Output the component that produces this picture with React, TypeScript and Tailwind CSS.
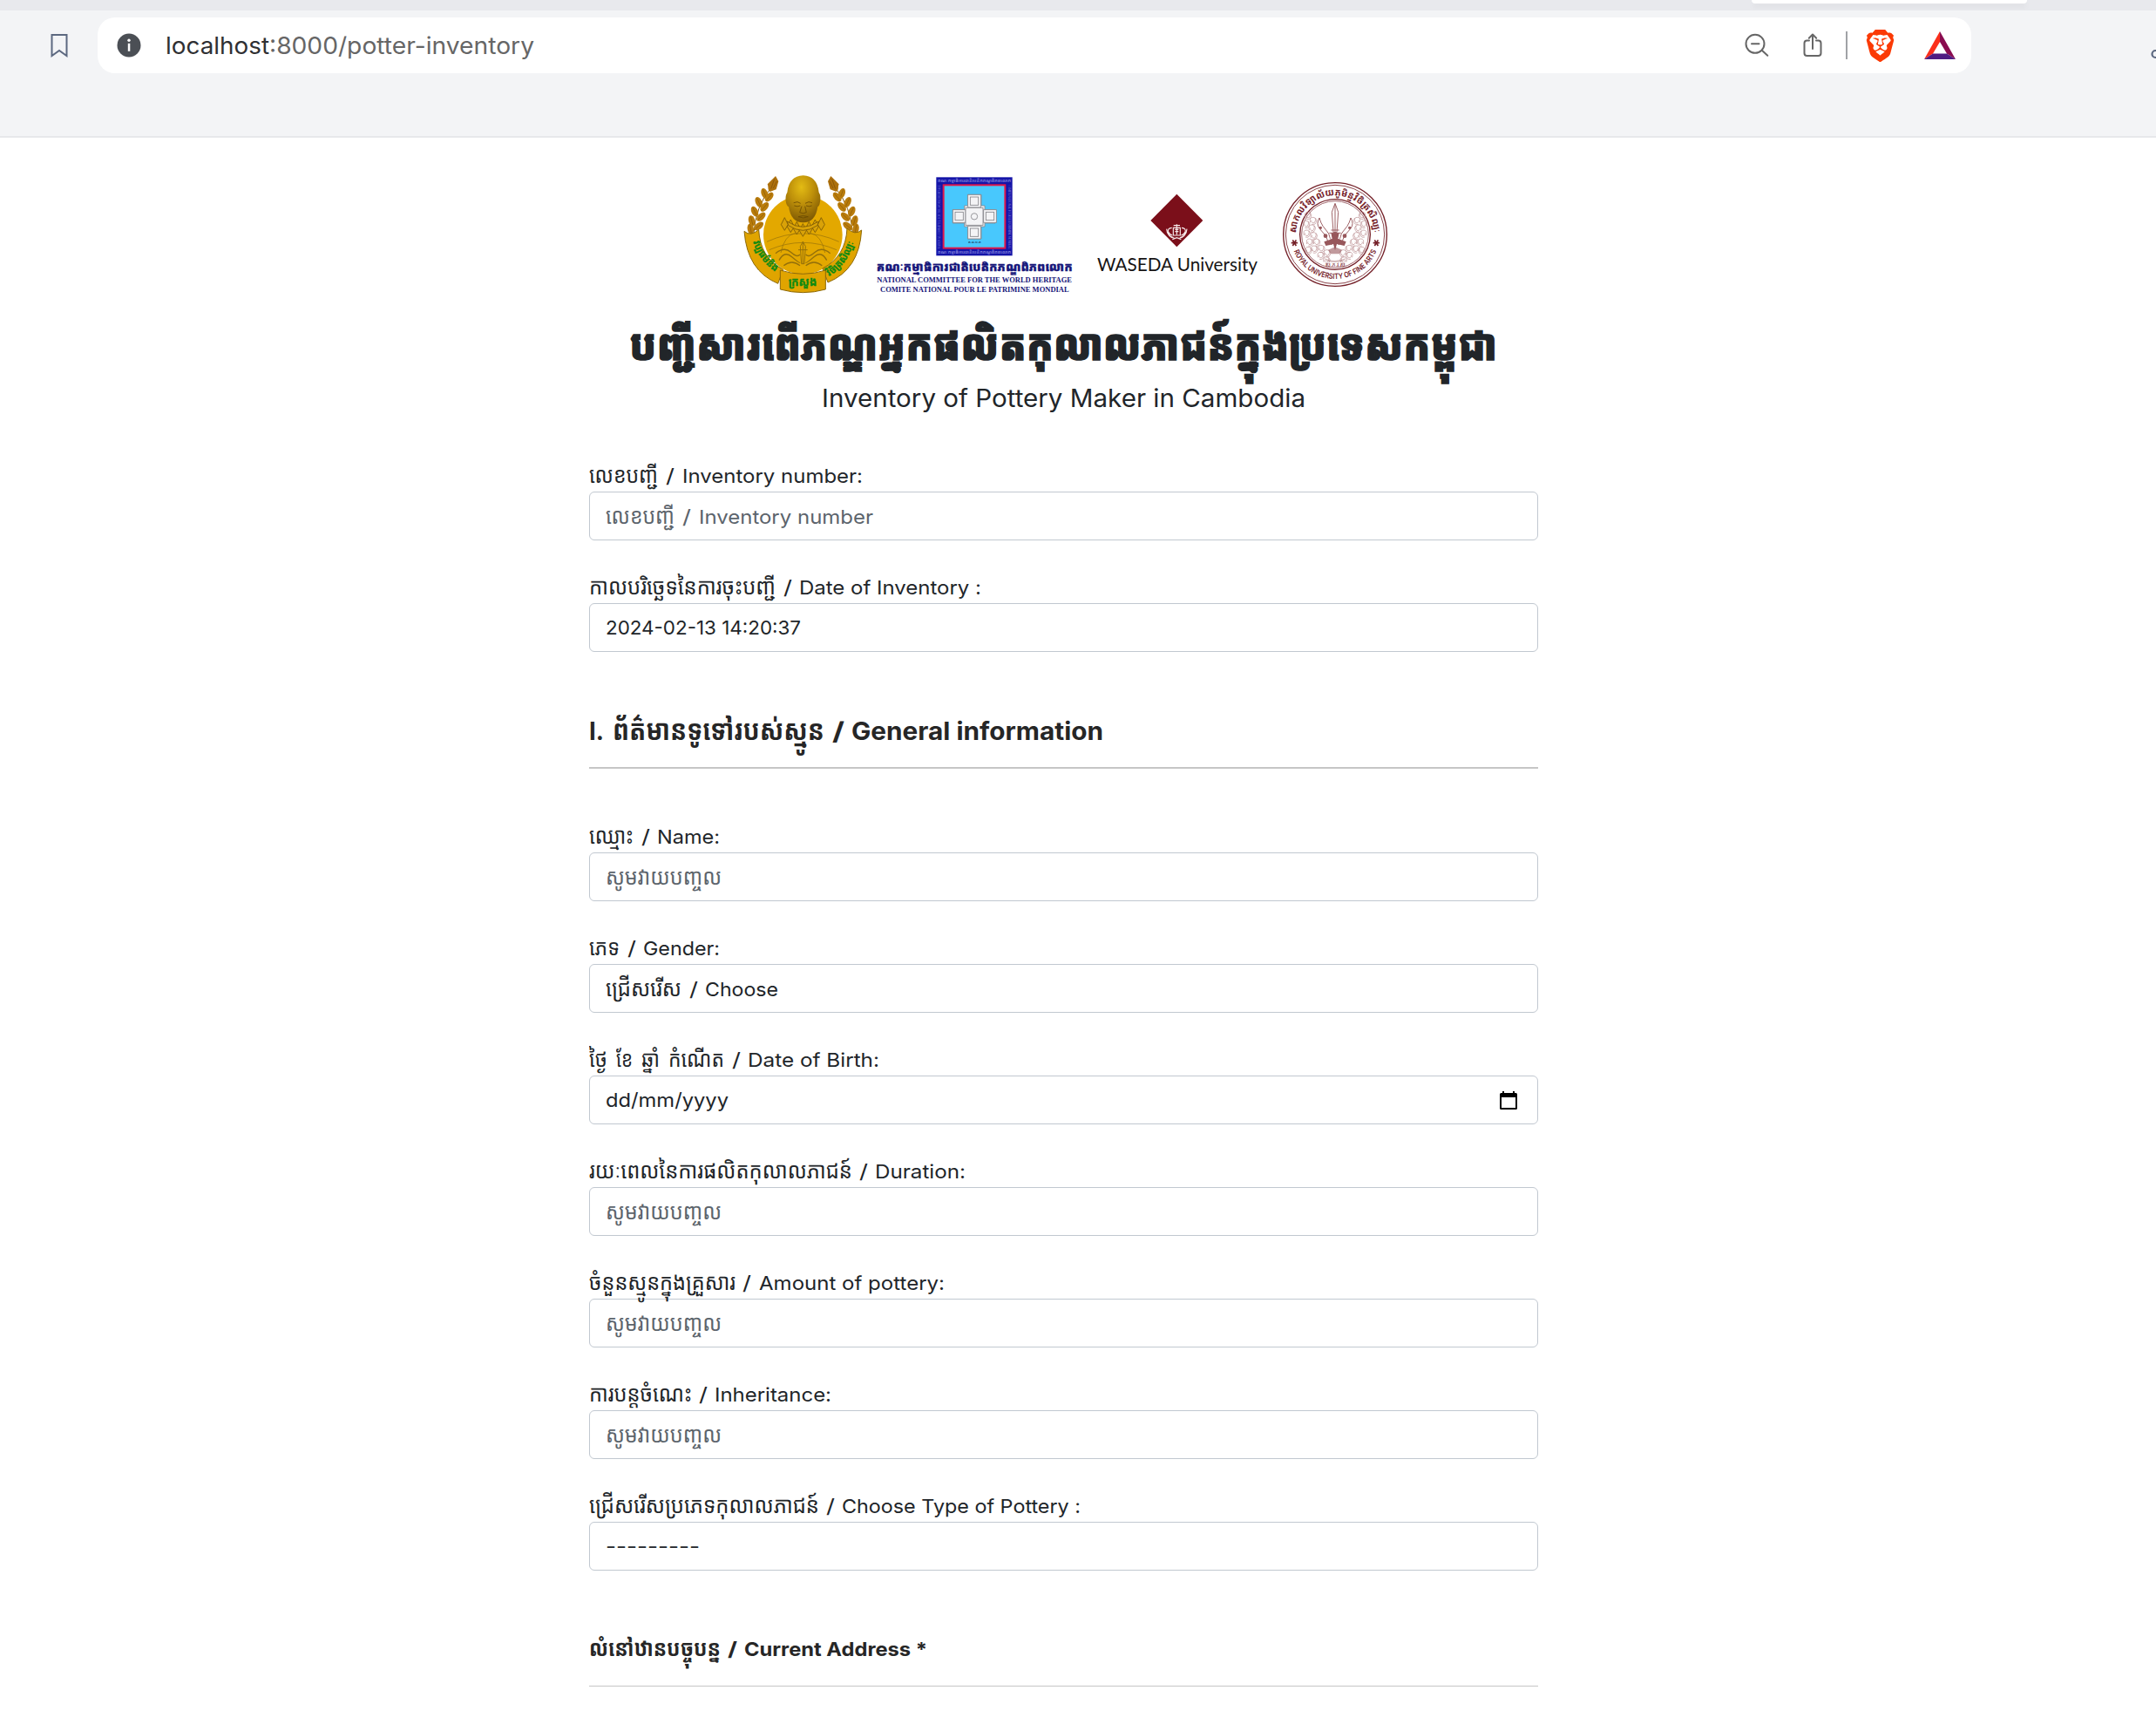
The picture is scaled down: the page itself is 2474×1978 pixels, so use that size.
import { useLayoutEffect, useRef } from "react";
import { SiBrave } from "react-icons/si";

type Run = [text: string, width: number, gap?: number];

const khmer = /[\u1780-\u17ff]/;

/* One piece of text stretched or squeezed to an exact advance width. */
function Fit({ text, width, gap }: { text: string; width: number; gap: number }) {
  const ref = useRef<HTMLSpanElement>(null);
  useLayoutEffect(() => {
    const el = ref.current;
    if (!el) return;
    el.style.transform = "none";
    const natural = el.getBoundingClientRect().width;
    if (natural > 0) el.style.transform = `scaleX(${width / natural})`;
  }, [width]);
  return (
    <span
      className={khmer.test(text) ? "inline-block text-[1.18em] whitespace-nowrap" : "inline-block whitespace-nowrap"}
      style={{ width, marginLeft: gap }}
    >
      <span ref={ref} className="inline-block origin-left whitespace-nowrap">
        {text}
      </span>
    </span>
  );
}

function Line({ runs }: { runs: Run[] }) {
  return (
    <span className="flex items-baseline whitespace-nowrap">
      {runs.map(([text, width, gap = 10], i) => (
        <Fit key={i} text={text} width={width} gap={i === 0 ? 0 : gap} />
      ))}
    </span>
  );
}

const enterHint: Run[] = [["សូមវាយបញ្ចល", 133]];

interface FieldData {
  label: Run[];
  value: Run[];
  hint?: boolean;
  date?: boolean;
}

const topFields: FieldData[] = [
  {
    label: [["លេខបញ្ជី", 79], ["/", 10, 9], ["Inventory number:", 207, 9]],
    value: [["លេខបញ្ជី", 79], ["/", 10, 9], ["Inventory number", 200, 9]],
    hint: true,
  },
  {
    label: [["កាលបរិច្ឆេទនៃការចុះបញ្ជី", 214], ["/", 10, 9], ["Date of Inventory :", 209, 8]],
    value: [["2024-02-13 14:20:37", 224]],
  },
];

const generalFields: FieldData[] = [
  { label: [["ឈ្មោះ", 51], ["/", 10, 9], ["Name:", 72, 8]], value: enterHint, hint: true },
  {
    label: [["ភេទ", 35], ["/", 10, 9], ["Gender:", 88, 8]],
    value: [["ជ្រើសរើស", 87], ["/", 10, 9], ["Choose", 84, 8]],
  },
  {
    label: [["ថ្ងៃ", 21], ["ខែ", 19, 10], ["ឆ្នាំ", 21, 10], ["កំណើត", 64, 10], ["/", 10, 9], ["Date of Birth:", 151, 8]],
    value: [["dd/mm/yyyy", 141]],
    date: true,
  },
  { label: [["រយៈពេលនៃការផលិតកុលាលភាជន៍", 302], ["/", 10, 8], ["Duration:", 104, 8]], value: enterHint, hint: true },
  { label: [["ចំនួនស្មូនក្នុងគ្រួសារ", 168], ["/", 10, 8], ["Amount of pottery:", 213, 9]], value: enterHint, hint: true },
  { label: [["ការបន្តចំណេះ", 118], ["/", 10, 8], ["Inheritance:", 134, 8]], value: enterHint, hint: true },
  {
    label: [["ជ្រើសរើសប្រភេទកុលាលភាជន៍", 264], ["/", 10, 8], ["Choose Type of Pottery :", 274, 8]],
    value: [["---------", 108]],
  },
];

function CalendarIcon() {
  return (
    <svg viewBox="0 0 20 21" className="h-[21px] w-5">
      <path d="M3 0h2v2H3zM15 0h2v2h-2z" fill="#000" />
      <path d="M1.5 2h17A1.5 1.5 0 0 1 20 3.5v16a1.5 1.5 0 0 1-1.5 1.5h-17A1.5 1.5 0 0 1 0 19.500v-16A1.500 1.500 0 0 1 1.500 2zM2 7v12h16V7z" fill="#000" fillRule="evenodd" />
    </svg>
  );
}

function Field({ label, value, hint, date }: FieldData) {
  return (
    <div className="h-32">
      <div className="flex h-10 items-center pt-[3px] text-[22px] leading-10">
        <Line runs={label} />
      </div>
      <div
        className={
          "flex h-14 items-center justify-between rounded-[6px] border border-[#c1c8d0] bg-white pr-[23px] pl-[18px] text-[22px] leading-10 " +
          (hint ? "text-[#5c646c]" : "text-[#212529]")
        }
      >
        <Line runs={value} />
        {date && <CalendarIcon />}
      </div>
    </div>
  );
}

function BrowserBar() {
  return (
    <header className="flex h-[158px] flex-col border-b-2 border-[#e7e8eb] bg-[#f3f4f6]">
      <div className="h-3 overflow-hidden bg-[#e8e9ed] pl-[2010px]">
        <div className="h-1 w-[316px] rounded-b-xl bg-white shadow-md" />
      </div>
      <div className="flex h-[80px] items-center">
        <svg viewBox="0 0 20 28" className="ml-[58px] h-7 w-5" fill="none" stroke="#5c6880" strokeWidth="2">
          <path d="M1.500 2h17v24L10 20 1.500 26z" />
        </svg>
        <div className="ml-[34px] flex h-16 w-[2150px] items-center rounded-[20px] bg-white">
          <svg viewBox="0 0 28 28" className="ml-[22px] size-7">
            <circle cx="14" cy="14" r="13.500" fill="#4b4f55" />
            <circle cx="14" cy="8.200" r="1.700" fill="#fff" />
            <path d="M12.800 11.800h2.500v9h-2.500z" fill="#fff" />
          </svg>
          <div className="ml-7 flex text-[27px] leading-none text-[#666]">
            <span className="text-[#2f3033]"><Fit text="localhost" width={119} gap={0} /></span>
            <Fit text=":8000/potter-inventory" width={304} gap={0} />
          </div>
          <div className="ml-auto flex items-center">
            <svg viewBox="0 0 28 28" className="size-7" fill="none" stroke="#666" strokeWidth="2" strokeLinecap="round">
              <circle cx="12" cy="12.300" r="10.500" />
              <path d="M8 12.300h8.500M19.800 19.800l6.500 6" />
            </svg>
            <svg viewBox="0 0 22 28" className="ml-[39px] h-7 w-[22px]" fill="none" stroke="#666" strokeWidth="2" strokeLinecap="round" strokeLinejoin="round">
              <path d="M7 8.500H4.500A3 3 0 0 0 1.500 11.500v11.500a3 3 0 0 0 3 3h13a3 3 0 0 0 3-3v-11.500a3 3 0 0 0-3-3H15M11 18V1.800M6.800 5.800 11 1.500l4.200 4.300" />
            </svg>
            <div className="ml-[27px] h-8 w-0.5 bg-[#a0a2a6]" />
            <SiBrave className="ml-[19px] size-[37px] text-[#fb3a05]" />
            <svg viewBox="0 0 36 32" className="mr-[18px] ml-8 h-8 w-9">
              <path d="M18 0v12L10 25.500 0 32z" fill="#fb2f1b" />
              <path d="M18 0v12l8 13.500L36 32z" fill="#8a0c50" />
              <path d="M0 32 10 25.500h16L36 32z" fill="#4f1c82" />
            </svg>
          </div>
        </div>
        <svg viewBox="0 0 6 12" className="mt-5 ml-[206px] h-3 w-[6px]">
          <circle cx="5.500" cy="6" r="4" fill="none" stroke="#5c6880" strokeWidth="2.200" />
        </svg>
      </div>
    </header>
  );
}

const leaves = [
  [137, 70, 25], [112, 96, -20], [128, 108, 40], [92, 126, -25], [112, 142, 40],
  [78, 158, -25], [100, 176, 45], [68, 190, -15], [92, 208, 50], [64, 218, -10],
];

function Laurel() {
  return (
    <g>
      <path d="M135 75Q80 140 74 240" fill="none" stroke="#8a5a05" strokeWidth="3" />
      {leaves.map(([x, y, r], i) => (
        <g key={i} transform={`rotate(${r} ${x} ${y})`}>
          <ellipse cx={x} cy={y} rx="11" ry="19" fill="#b97c0c" />
          <path d={`M${x} ${y - 15}v30`} stroke="#8f5c06" strokeWidth="2" />
        </g>
      ))}
      <path d="M150 36l-28 28 8 26 22-8 8-28z" fill="#ad700c" />
      <path d="M146 46l-12 34M154 54l-12 24" stroke="#7c4d04" strokeWidth="2" />
    </g>
  );
}

function MinistryEmblem() {
  const petals = [-60, -40, -20, 0, 20, 40, 60];
  return (
    <svg viewBox="39 30 411 408" className="h-[136px] w-[137px] overflow-visible">
      <defs>
        <radialGradient id="face" cx="45%" cy="25%" r="80%">
          <stop offset="0" stopColor="#e3bb14" />
          <stop offset="0.450" stopColor="#bd8f0a" />
          <stop offset="1" stopColor="#765203" />
        </radialGradient>
        <path id="ribbonLeft" d="M72 262Q92 330 158 372" />
        <path id="ribbonRight" d="M334 382Q402 336 420 258" />
      </defs>
      <Laurel />
      <g transform="translate(490 0) scale(-1 1)"><Laurel /></g>
      <circle cx="244" cy="238" r="136" fill="#e3a800" />
      <g fill="none" stroke="#94700a" strokeWidth="2">
        <path d="M120 262Q244 205 368 262M168 300Q180 240 218 232M320 300Q308 240 270 232M128 290Q244 240 360 290" />
        <path d="M244 262l-9 16 4 60h10l4-60zM228 290h32M244 262v76" strokeWidth="3" />
        <path d="M150 302q30-24 52-4t32 8M338 302q-30-24-52-4t-32 8M162 326q18-34 44-12t28 20M326 326q-18-34-44-12t-28 20M178 344q28-22 56 0M310 344q-28-22-56 0" strokeWidth="4" />
      </g>
      <g fill="#d9a208" stroke="#7a5806" strokeWidth="2.500">
        {petals.map((a) => (
          <path key={a} d="M244 244l-12-20 12-24 12 24z" transform={`translate(${a * 1.050} ${-Math.abs(a) * 0.350})`} />
        ))}
        <path d="M190 192q54 38 108 0l-4 14q-50 34-100 0z" />
      </g>
      <path d="M190 92Q196 36 245 34q48 2 54 58 8 12 4 32-2 16-8 18-8 54-50 54t-50-54q-8-4-10-20-2-20 5-30z" fill="url(#face)" />
      <g fill="none" stroke="#6b4a03" strokeWidth="2.500">
        <path d="M212 128q14-7 24 2M252 130q12-9 24-2M214 138q11 5 21 0M255 138q11 5 20 0M240 140l-7 21q12 7 23 0l-5-21M228 176q16-7 34 0-16 8-34 0" />
      </g>
      <path d="M42 226q22 20 50-6Q96 316 176 358l-18 48Q52 362 42 226zM446 222q-22 20-50-6-4 96-84 138l18 48q108-44 116-180z" fill="#e0a400" stroke="#8c6807" strokeWidth="3" />
      <path d="M166 360q78 26 156 0v66q-78 22-156 0z" fill="#e0a400" stroke="#8c6807" strokeWidth="3" />
      <g fill="#0d8a12" stroke="#0d8a12" strokeWidth="1" fontWeight="700" fontFamily="'Noto Sans Khmer', 'Noto Sans', sans-serif">
        <text x="194" y="413" fontSize="38" textLength="98" lengthAdjust="spacingAndGlyphs">ក្រសួង</text>
        <text fontSize="34"><textPath href="#ribbonLeft" textLength="132" lengthAdjust="spacingAndGlyphs">វប្បធម៌និង</textPath></text>
        <text fontSize="34"><textPath href="#ribbonRight" textLength="148" lengthAdjust="spacingAndGlyphs">វិចិត្រសិល្បៈ</textPath></text>
      </g>
    </svg>
  );
}

function HeritageLogo() {
  const rooms = [[812, 100], [760, 152], [866, 152], [812, 208]];
  return (
    <svg viewBox="495 30 681 408" className="ml-[15px] h-[136px] w-[227px] overflow-visible">
      <rect x="703" y="40" width="262" height="270" fill="#1414a8" />
      <rect x="728" y="67" width="212" height="217" fill="#48c8fd" stroke="#e0184a" strokeWidth="6" />
      <g fill="#7676d6" fontSize="15" fontWeight="700" fontFamily="'Noto Sans Khmer', 'Noto Sans', sans-serif">
        <text x="708" y="58" textLength="252" lengthAdjust="spacingAndGlyphs">គណៈកម្មាធិការជាតិបេតិកភណ្ឌពិភពលោក</text>
        <text x="708" y="304" textLength="252" lengthAdjust="spacingAndGlyphs">គណៈកម្មាធិការជាតិបេតិកភណ្ឌពិភពលោក</text>
      </g>
      <g fill="#7676d6" fontSize="11" fontFamily="'Liberation Serif', serif">
        <text transform="translate(718 286) rotate(-90)" textLength="220" lengthAdjust="spacingAndGlyphs">NATIONAL COMMITTEE FOR THE WORLD HERITAGE</text>
        <text transform="translate(950 66) rotate(90)" textLength="220" lengthAdjust="spacingAndGlyphs">COMITE NATIONAL POUR LE PATRIMINE MONDIAL</text>
      </g>
      <g fill="#f4f4f6" stroke="#85858a" strokeWidth="2.500">
        <path d="M812 100h46v38h12v14h36v46h-36v12h-12v42h-46v-42h-12v-12h-40v-46h40v-14h12z" />
        {rooms.map(([x, y]) => (
          <g key={`${x}-${y}`}>
            <rect x={x} y={y} width="44" height="44" />
            <rect x={x + 8} y={y + 8} width="28" height="28" />
          </g>
        ))}
        <rect x="804" y="145" width="60" height="60" />
        <circle cx="834" cy="175" r="11" />
      </g>
      <text x="813" y="268" fontSize="12" fontWeight="700" fill="#1b3d68" textLength="44" fontFamily="'Noto Sans Khmer', sans-serif">គ.ជ.ប.ភ</text>
      <g fill="#16167a">
        <text x="497" y="364" fontSize="42" fontWeight="900" stroke="#16167a" strokeWidth="1" textLength="675" lengthAdjust="spacingAndGlyphs" fontFamily="'Noto Sans Khmer', 'Noto Sans', sans-serif">គណៈកម្មាធិការជាតិបេតិកភណ្ឌពិភពលោក</text>
        <text x="499" y="402" fontSize="27" fontWeight="700" textLength="671" lengthAdjust="spacingAndGlyphs" fontFamily="'Liberation Serif', serif">NATIONAL COMMITTEE FOR THE WORLD HERITAGE</text>
        <text x="510" y="435" fontSize="27" fontWeight="700" textLength="650" lengthAdjust="spacingAndGlyphs" fontFamily="'Liberation Serif', serif">COMITE NATIONAL POUR LE PATRIMINE MONDIAL</text>
      </g>
    </svg>
  );
}

function WasedaLogo() {
  return (
    <svg viewBox="54 30 558 408" className="ml-[26px] h-[136px] w-[186px] overflow-visible">
      <path d="M331 98l90 91-90 91-90-91z" fill="#7b0f1a" />
      <g fill="none" stroke="#f6e9ea" strokeWidth="3.500">
        <path d="M320 206h22M331 202v10M319 214h24v26h-24zM325 220h12M325 227h12M331 216v22" />
        <path d="M314 214q-16 2-12 14 4 10 14 12M348 214q16 2 12 14-4 10-14 12M296 218q2 24 24 30M366 218q-2 24-24 30M304 240q14 14 27 8 13 6 27-8M316 254l15-6 15 6" />
      </g>
      <text x="57" y="362" fontSize="66" fill="#161414" textLength="552" lengthAdjust="spacingAndGlyphs" fontFamily="Lato, sans-serif">WASEDA University</text>
    </svg>
  );
}

function Scrolls() {
  const curls = [
    [782, 170], [800, 188], [776, 200], [796, 214], [778, 232], [802, 240], [788, 262],
    [812, 262], [804, 286], [828, 284], [826, 308], [848, 300], [846, 324], [784, 290],
  ];
  return (
    <g fill="none" stroke="#b98d90" strokeWidth="2">
      {curls.map(([x, y], i) => (
        <path key={i} d={`M${x - 9} ${y + 8}q-4-18 8-18t9 12-10 7-3-9M${x + 8} ${y - 8}q8 8 2 17M${x - 4} ${y + 14}q8 4 14-4`} />
      ))}
    </g>
  );
}

function FineArtsSeal() {
  return (
    <svg viewBox="690 30 372 408" className="ml-[26px] h-[136px] w-[124px] overflow-visible">
      <defs>
        <path id="sealTop" d="M742 237a134 134 0 0 1 268 0" />
        <path id="sealBottom" d="M723 237a153 153 0 0 0 306 0" />
      </defs>
      <g fill="none" stroke="#742028">
        <circle cx="876" cy="237" r="178" strokeWidth="4" />
        <circle cx="876" cy="237" r="170" strokeWidth="2.500" />
        <circle cx="876" cy="237" r="121" strokeWidth="4" />
        <circle cx="876" cy="237" r="115" strokeWidth="2" />
      </g>
      <Scrolls />
      <g transform="translate(1752 0) scale(-1 1)"><Scrolls /></g>
      <g fill="#fff" stroke="#8b4449" strokeWidth="2.500">
        <path d="M876 130l-11 30 5 70h12l5-70z" />
        <path d="M876 134v130M856 232h40M862 222h28" />
        <path d="M822 180q-12 20 0 36l22 26q4 20 20 30l6-8q-14-12-16-30l-20-26q-8-12-12-28zM930 180q12 20 0 36l-22 26q-4 20-20 30l-6-8q14-12 16-30l20-26q8-12 12-28z" />
      </g>
      <g fill="#97575b">
        <path d="M862 232h28l-4 20 28 10-6 14-26-6-6 22-6-22-26 6-6-14 28-10z" />
        <circle cx="843" cy="242" r="7" /><circle cx="909" cy="242" r="7" />
        <circle cx="826" cy="214" r="5" /><circle cx="926" cy="214" r="5" />
        <path d="M852 290l24-10 24 10-10 14h-28z" opacity=".6" />
        <path d="M838 318q38 18 76 0l-8 10q-30 10-60 0z" opacity=".4" />
      </g>
      <g stroke="#742028" strokeWidth="5">
        <path d="M725 266h22M730 256l12 20M742 256l-12 20" />
        <path d="M1007 266h22M1012 256l12 20M1024 256l-12 20" />
      </g>
      <g fill="#742028">
        <text x="843" y="349" fontSize="18" textLength="68" lengthAdjust="spacingAndGlyphs" fontFamily="'Noto Sans Khmer', sans-serif">ស.ភ.វ.ស</text>
        <text fontSize="33" fontWeight="700" fontFamily="'Noto Sans Khmer', 'Noto Sans', sans-serif">
          <textPath href="#sealTop" startOffset="4" textLength="412" lengthAdjust="spacingAndGlyphs">សាកលវិទ្យាល័យភូមិន្ទវិចិត្រសិល្បៈ</textPath>
        </text>
        <text fontSize="26" fontWeight="600" fontFamily="Inter, sans-serif">
          <textPath href="#sealBottom" startOffset="58" textLength="364" lengthAdjust="spacingAndGlyphs">ROYAL UNIVERSITY OF FINE ARTS</textPath>
        </text>
      </g>
    </svg>
  );
}

export default function App() {
  return (
    <div className="h-[1978px] w-[2474px] overflow-hidden bg-white font-['Inter','Noto_Sans_Khmer','Noto_Sans',sans-serif] text-[#212529]">
      <BrowserBar />
      <main className="ml-[676px] w-[1089px]">
        <div className="flex h-[178px] pt-[42px] pl-[177px]">
          <MinistryEmblem />
          <HeritageLogo />
          <WasedaLogo />
          <FineArtsSeal />
        </div>
        <h1 className="mt-[29px] mb-[7px] flex h-[60px] items-center pl-[46px] text-[42px] leading-[60px] font-black [-webkit-text-stroke:1.5px_#212529]">
          <Line runs={[["បញ្ជីសារពើភណ្ឌអ្នកផលិតកុលាលភាជន៍ក្នុងប្រទេសកម្ពុជា", 996]]} />
        </h1>
        <p className="flex h-[50px] items-center pl-[267px] text-[28px] leading-[50px]">
          <Line runs={[["Inventory of Pottery Maker in Cambodia", 555]]} />
        </p>
        <section className="pt-[42px]">
          {topFields.map((f, i) => <Field key={i} {...f} />)}
        </section>
        <h2 className="flex h-[102px] items-center border-b-2 border-[#c6c6c6] pt-[16px] text-[28px] leading-[48px] font-bold text-[#262626]">
          <Line runs={[["I.", 17], ["ព័ត៌មានទូទៅរបស់ស្មូន", 243], ["/", 14, 9], ["General information", 289, 8]]} />
        </h2>
        <section className="pt-14">
          {generalFields.map((f, i) => <Field key={i} {...f} />)}
        </section>
        <h3 className="flex h-[101px] items-center border-b border-[#c6c6c6] pt-[14px] text-[22px] leading-10 font-bold text-[#262626]">
          <Line runs={[["លំនៅឋានបច្ចុបន្ន", 151], ["/", 11, 8], ["Current Address *", 210, 8]]} />
        </h3>
      </main>
    </div>
  );
}
